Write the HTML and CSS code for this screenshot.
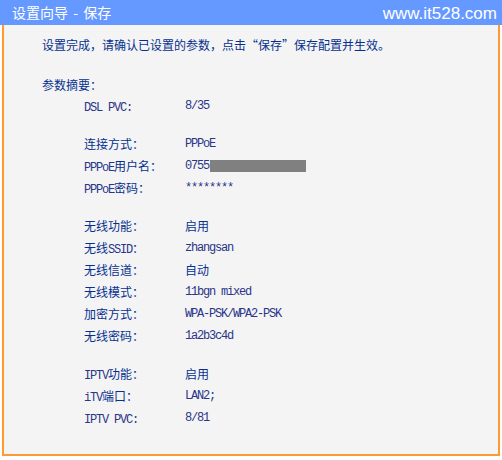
FILE: index.html
```html
<!DOCTYPE html>
<html lang="zh-CN">
<head>
<meta charset="utf-8">
<link rel="stylesheet" href="styles.css">
</head>
<body>
<div class="header">
  <span class="title">设置向导 - 保存</span>
  <span class="site">www.it528.com</span>
</div>
<div class="panel">
  <p class="intro">设置完成，请确认已设置的参数，点击“保存”保存配置并生效。</p>
  <p class="sum-title">参数摘要：</p>
  <div class="group">
    <div class="row"><span class="label"><span class="m">DSL PVC:</span></span><span class="value"><span class="m">8/35</span></span></div>
  </div>
  <div class="group">
    <div class="row"><span class="label">连接方式：</span><span class="value"><span class="m">PPPoE</span></span></div>
    <div class="row"><span class="label"><span class="m">PPPoE</span>用户名：</span><span class="value"><span class="m">0755</span><span class="mask"></span></span></div>
    <div class="row"><span class="label"><span class="m">PPPoE</span>密码：</span><span class="value"><span class="m">********</span></span></div>
  </div>
  <div class="group">
    <div class="row"><span class="label">无线功能：</span><span class="value">启用</span></div>
    <div class="row"><span class="label">无线<span class="m">SSID</span>：</span><span class="value"><span class="m">zhangsan</span></span></div>
    <div class="row"><span class="label">无线信道：</span><span class="value">自动</span></div>
    <div class="row"><span class="label">无线模式：</span><span class="value"><span class="m">11bgn mixed</span></span></div>
    <div class="row"><span class="label">加密方式：</span><span class="value"><span class="m">WPA-PSK/WPA2-PSK</span></span></div>
    <div class="row"><span class="label">无线密码：</span><span class="value"><span class="m">1a2b3c4d</span></span></div>
  </div>
  <div class="group">
    <div class="row"><span class="label"><span class="m">IPTV</span>功能：</span><span class="value">启用</span></div>
    <div class="row"><span class="label"><span class="m">iTV</span>端口：</span><span class="value"><span class="m">LAN2;</span></span></div>
    <div class="row"><span class="label"><span class="m">IPTV PVC:</span></span><span class="value"><span class="m">8/81</span></span></div>
  </div>
</div>
</body>
</html>
```
FILE: styles.css
```css
html, body {
  margin: 0;
  padding: 0;
  background: #ffffff;
}
body {
  width: 502px;
  height: 460px;
  font-family: "Noto Sans CJK SC", "Noto Sans", sans-serif;
  font-size: 12px;
  color: #06308f;
}
.header {
  height: 25px;
  background: #6699ff;
  color: #ffffff;
  display: flex;
  justify-content: space-between;
  align-items: center;
  padding: 0 5px 0 12px;
}
.title {
  font-size: 14px;
  line-height: 25px;
  word-spacing: 2px;
}
.site {
  font-family: "Liberation Sans", "Noto Sans", sans-serif;
  font-size: 17px;
  line-height: 25px;
  padding-top: 1px;
}
.panel {
  margin-left: 2px;
  width: 498px;
  height: 431px;
  background: #f4f4f4;
  border-left: 2px solid #ff9a33;
  border-right: 2px solid #ff9a33;
  border-bottom: 2px solid #ff9a33;
  padding-left: 38px;
  box-sizing: border-box;
}
.intro {
  margin: 0;
  padding-top: 9px;
  line-height: 22px;
}
.sum-title {
  margin: 19px 0 0 0;
  line-height: 20px;
}
.group {
  padding-left: 42px;
}
.group + .group {
  margin-top: 16px;
}
.row {
  display: flex;
  height: 22px;
  line-height: 22px;
}
.label {
  width: 101px;
  flex: none;
}
.value {
  display: flex;
  align-items: center;
}
.m {
  font-family: "Liberation Mono", "DejaVu Sans Mono", monospace;
  font-size: 12px;
  letter-spacing: -1.2px;
  color: #2a3488;
}
.mask {
  display: inline-block;
  width: 96px;
  height: 12px;
  margin-left: 1px;
  background: #808080;
}
```
